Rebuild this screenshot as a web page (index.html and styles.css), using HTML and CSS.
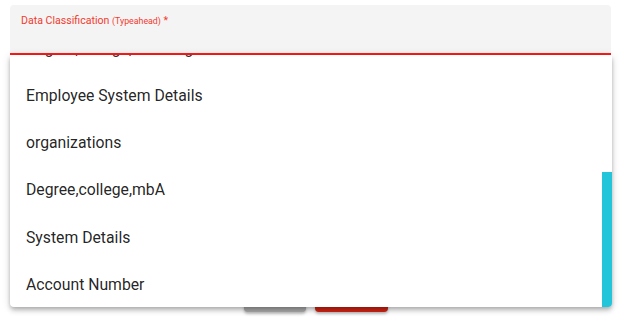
FILE: index.html
```html
<!DOCTYPE html>
<html lang="en">
<head>
<meta charset="utf-8">
<title>Data Classification</title>
<link rel="stylesheet" href="styles.css">
</head>
<body>
<div class="page">
  <div class="field">
    <label class="field-label">Data Classification <span class="hint">(Typeahead)</span> *</label>
  </div>
  <div class="underline"></div>
  <div class="actions">
    <button class="btn btn-cancel" type="button"></button>
    <button class="btn btn-submit" type="button"></button>
  </div>
  <div class="panel">
    <ul class="options">
      <li class="option">Degree,college,branding</li>
      <li class="option">Employee System Details</li>
      <li class="option">organizations</li>
      <li class="option">Degree,college,mbA</li>
      <li class="option">System Details</li>
      <li class="option">Account Number</li>
    </ul>
    <div class="scroll-thumb"></div>
  </div>
</div>
</body>
</html>
```

FILE: styles.css
```css
* { box-sizing: border-box; }

html, body {
  margin: 0;
  padding: 0;
  background: #ffffff;
  font-family: Roboto, "Noto Sans", "Liberation Sans", sans-serif;
}

.page {
  position: relative;
  width: 624px;
  height: 324px;
  padding: 5px 13px 0 10px;
}

.field {
  height: 48px;
  background: #f4f4f4;
  border-radius: 4px 4px 0 0;
  padding: 9px 11px 0;
}

.field-label {
  display: block;
  color: #f23a2f;
  font-size: 10.6px;
  line-height: 13px;
}

.hint {
  font-size: 8.8px;
}

.underline {
  height: 2px;
  background: #ff1a1a;
}

.actions {
  display: flex;
  gap: 9px;
  margin-top: 222px;
  padding-left: 234px;
}

.btn {
  height: 35px;
  border: none;
  border-radius: 4px;
  padding: 0;
  box-shadow: 0 2px 3px rgba(0, 0, 0, 0.25);
}

.btn-cancel {
  width: 62px;
  background: #ababab;
}

.btn-submit {
  width: 73px;
  background: #d32414;
}

.panel {
  position: absolute;
  left: 10px;
  top: 55px;
  width: 602px;
  height: 252px;
  overflow: hidden;
  background: #ffffff;
  border-radius: 0 0 4px 4px;
  box-shadow: 0 2px 4px -1px rgba(0, 0, 0, 0.2),
              0 4px 5px 0 rgba(0, 0, 0, 0.14),
              0 1px 10px 0 rgba(0, 0, 0, 0.12);
}

.options {
  list-style: none;
  margin: -30.5px 0 0;
  padding: 0;
}

.option {
  height: 47.25px;
  display: flex;
  align-items: center;
  padding: 0 16px;
  font-size: 15.75px;
  color: rgba(0, 0, 0, 0.87);
  white-space: nowrap;
}

.scroll-thumb {
  position: absolute;
  right: 0;
  top: 117px;
  width: 10px;
  height: 135px;
  background: #22c5da;
}
```
